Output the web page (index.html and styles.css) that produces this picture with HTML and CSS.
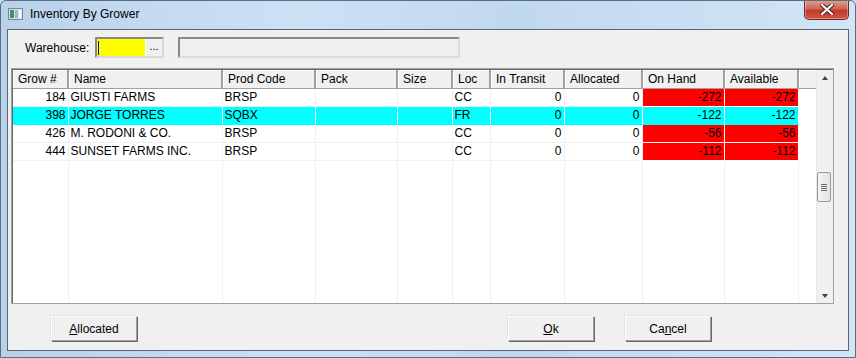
FILE: index.html
```html
<!doctype html>
<html>
  <head>
    <title>Inventory By Grower</title>
    <link rel="stylesheet" href="styles.css">
  </head>
  <body>
    <div class="window">
      <div class="titlebar">
        <svg class="appIcon" width="15" height="12" viewBox="0 0 15 12">
          <rect x="0.5" y="0.5" width="14" height="11" fill="#d8dde2" stroke="#7d8791"/>
          <rect x="2" y="2" width="4" height="8" fill="#3f8f7a"/>
          <rect x="7" y="2" width="3" height="8" fill="#9fb8c8"/>
          <rect x="11" y="2" width="2" height="8" fill="#ffffff"/>
        </svg>
        <span class="titleText">Inventory By Grower</span>
        <div class="closeBtn">
          <svg width="14" height="11" viewBox="0 0 14 11">
            <path d="M2 1 L12 10 M12 1 L2 10" stroke="#4a1a16" stroke-width="4" stroke-linecap="square"/>
            <path d="M2 1 L12 10 M12 1 L2 10" stroke="#ffffff" stroke-width="2.2" stroke-linecap="square"/>
          </svg>
        </div>
      </div>

      <div class="client">
        <div class="warehouseRow">
          <span class="label">Warehouse:</span>
          <div class="lookupBox">
            <div class="yellowInput"><span class="caret"></span></div>
            <div class="dotsBtn">...</div>
          </div>
          <div class="descBox"></div>
        </div>

        <div class="grid">
          <div class="gridBody">
            <table class="growerTable">
              <colgroup>
                <col style="width:55px"><col style="width:154px"><col style="width:93px"><col style="width:82px">
                <col style="width:55px"><col style="width:38px"><col style="width:74px"><col style="width:78px">
                <col style="width:82px"><col style="width:74px"><col>
              </colgroup>
              <thead>
                <tr>
                  <th class="num">Grow #</th><th>Name</th><th>Prod Code</th><th>Pack</th><th>Size</th><th>Loc</th>
                  <th>In Transit</th><th>Allocated</th><th>On Hand</th><th>Available</th><th></th>
                </tr>
              </thead>
              <tbody>
                <tr>
                  <td class="num">184</td><td>GIUSTI FARMS</td><td>BRSP</td><td></td><td></td><td>CC</td>
                  <td class="num">0</td><td class="num">0</td><td class="num neg">-272</td><td class="num neg">-272</td><td class="blank"></td>
                </tr>
                <tr class="selected">
                  <td class="num">398</td><td>JORGE TORRES</td><td>SQBX</td><td></td><td></td><td>FR</td>
                  <td class="num">0</td><td class="num">0</td><td class="num">-122</td><td class="num">-122</td><td class="blank"></td>
                </tr>
                <tr>
                  <td class="num">426</td><td>M. RODONI &amp; CO.</td><td>BRSP</td><td></td><td></td><td>CC</td>
                  <td class="num">0</td><td class="num">0</td><td class="num neg">-56</td><td class="num neg">-56</td><td class="blank"></td>
                </tr>
                <tr>
                  <td class="num">444</td><td>SUNSET FARMS INC.</td><td>BRSP</td><td></td><td></td><td>CC</td>
                  <td class="num">0</td><td class="num">0</td><td class="num neg">-112</td><td class="num neg">-112</td><td class="blank"></td>
                </tr>
                <tr class="filler">
                  <td></td><td></td><td></td><td></td><td></td><td></td><td></td><td></td><td></td><td></td><td class="blank"></td>
                </tr>
              </tbody>
            </table>
          </div>
          <div class="scrollbar">
            <div class="arrow up"></div>
            <div class="track">
              <div class="thumb"><span></span><span></span><span></span><span></span></div>
            </div>
            <div class="arrow down"></div>
          </div>
        </div>

        <div class="buttonRow">
          <div class="btn"><u>A</u>llocated</div>
          <div class="btn okBtn"><u>O</u>k</div>
          <div class="btn">Ca<u>n</u>cel</div>
        </div>
      </div>
    </div>
  </body>
</html>
```

FILE: styles.css
```css
body {
  margin: 0;
  background: #c6dcf1;
  font-family: "Segoe UI", "Liberation Sans", Arial, sans-serif;
  font-size: 12px;
  color: #000;
}

.window {
  width: 856px;
  height: 358px;
  box-sizing: border-box;
  border: 1px solid #5d6d80;
  border-radius: 6px 6px 0 0;
  background: linear-gradient(90deg, #b8d2ec 0%, #cde1f5 35%, #c0d8ef 60%, #d3e5f6 100%);
  display: flex;
  flex-direction: column;
  overflow: hidden;
}

.titlebar {
  height: 28px;
  display: flex;
  align-items: flex-start;
  padding-left: 7px;
}

.appIcon {
  margin-top: 7px;
}

.titleText {
  margin-left: 7px;
  margin-top: 6px;
  font-size: 12px;
}

.closeBtn {
  margin-left: auto;
  margin-right: 6px;
  margin-top: -1px;
  width: 43px;
  height: 19px;
  border: 1px solid #6e2a22;
  border-top: none;
  border-radius: 0 0 5px 5px;
  background: linear-gradient(#e0a293 0%, #d1645a 45%, #c2392d 55%, #d2553e 100%);
  display: flex;
  align-items: center;
  justify-content: center;
  box-shadow: inset 0 0 0 1px rgba(255, 255, 255, 0.35);
}

.client {
  margin: 0 6px 6px 6px;
  flex: 1;
  border: 1px solid #5b6573;
  background: #f0f0f0;
  display: flex;
  flex-direction: column;
}

.warehouseRow {
  display: flex;
  align-items: center;
  margin-top: 7px;
  height: 21px;
  padding-left: 17px;
}

.label {
  width: 70px;
}

.lookupBox {
  display: flex;
  height: 21px;
  box-sizing: border-box;
  border: 2px solid #8a8a8a;
  border-right-color: #d8d8d8;
  border-bottom-color: #d8d8d8;
  background: #fff;
}

.yellowInput {
  width: 48px;
  background: #ffff00;
  position: relative;
}

.caret {
  position: absolute;
  left: 1px;
  top: 2px;
  width: 1px;
  height: 14px;
  background: #0000e0;
}

.dotsBtn {
  width: 16px;
  background: #f0f0f0;
  border-left: 1px solid #fff;
  font-size: 11px;
  line-height: 14px;
  text-align: center;
}

.descBox {
  margin-left: 14px;
  width: 282px;
  height: 21px;
  box-sizing: border-box;
  border: 2px solid #8a8a8a;
  border-right-color: #dcdcdc;
  border-bottom-color: #dcdcdc;
  background: #f0f0f0;
}

.grid {
  margin: 10px 0 0 3px;
  width: 823px;
  height: 236px;
  box-sizing: border-box;
  border: 1px solid #a0a0a0;
  box-shadow: inset 1px 1px 0 #696969;
  padding: 1px 0 0 1px;
  display: flex;
  background: #fff;
}

.gridBody {
  flex: 1;
  overflow: hidden;
}

.growerTable {
  border-collapse: collapse;
  table-layout: fixed;
  width: 805px;
  height: 233px;
}

.growerTable th {
  height: 18px;
  padding: 0 0 0 5px;
  box-sizing: border-box;
  background: #f0f0f0;
  font-weight: normal;
  text-align: left;
  border-right: 2px solid #a0a0a0;
  border-bottom: 1px solid #a0a0a0;
  box-shadow: inset 1px 1px 0 #ffffff;
  white-space: nowrap;
  overflow: hidden;
}

.growerTable th:last-child {
  border-right: none;
}

.growerTable td {
  height: 18px;
  padding: 0 2px;
  box-sizing: border-box;
  border-right: 1px solid #f0f0f0;
  border-bottom: 1px solid #f0f0f0;
  white-space: nowrap;
  overflow: hidden;
  line-height: 17px;
}

.growerTable td.num {
  text-align: right;
}

.growerTable td.neg {
  background: #ff0000;
  border-right-color: #fff;
  border-bottom-color: #fff;
}

.growerTable tr.selected td {
  background: #00ffff;
  border-right-color: #fff;
  border-bottom-color: #00ffff;
}

.growerTable tr.selected td.blank,
.growerTable td.blank {
  background: #fff;
  border-right: none;
  border-bottom: none;
}

.growerTable tr.filler td {
  height: auto;
  border-bottom: none;
}

.scrollbar {
  width: 16px;
  display: flex;
  flex-direction: column;
  background: #f0f0f0;
  border-left: 1px solid #e8e8e8;
}

.arrow {
  height: 16px;
  position: relative;
}

.arrow::after {
  content: "";
  position: absolute;
  left: 5px;
  border-left: 3px solid transparent;
  border-right: 3px solid transparent;
}

.arrow.up::after {
  top: 6px;
  border-bottom: 4px solid #404040;
}

.arrow.down::after {
  top: 7px;
  border-top: 4px solid #404040;
}

.track {
  flex: 1;
  padding-top: 86px;
}

.thumb {
  width: 14px;
  height: 30px;
  box-sizing: border-box;
  border: 1px solid #999;
  border-radius: 2px;
  background: linear-gradient(90deg, #f4f4f4, #e2e2e2);
  display: flex;
  flex-direction: column;
  align-items: center;
  justify-content: center;
  gap: 1px;
}

.thumb span {
  width: 6px;
  height: 1px;
  background: #6a6a6a;
}

.buttonRow {
  display: flex;
  margin-top: 12px;
  padding-left: 43px;
}

.btn {
  width: 86px;
  height: 25px;
  box-sizing: border-box;
  border: 1px solid #a0a0a0;
  border-top-color: #fff;
  border-left-color: #fff;
  box-shadow: 1px 1px 0 #696969, -1px -1px 0 #e3e3e3;
  background: #f0f0f0;
  display: flex;
  align-items: center;
  justify-content: center;
  margin-right: 31px;
}

.okBtn {
  margin-left: 340px;
}
```
